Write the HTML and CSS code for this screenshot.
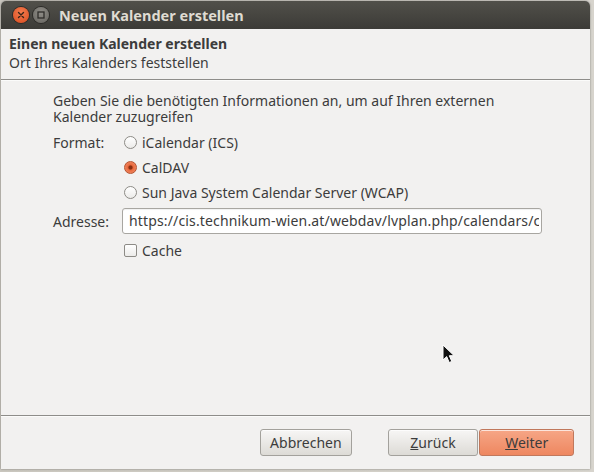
FILE: index.html
```html
<!DOCTYPE html>
<html lang="de">
<head>
<meta charset="utf-8">
<title>Neuen Kalender erstellen</title>
<link rel="stylesheet" href="styles.css">
</head>
<body>
<div class="window">
  <div class="titlebar">
    <span class="wbtn close">
      <svg width="10" height="10" viewBox="0 0 10 10"><path d="M2.5 2.5 L7.5 7.5 M7.5 2.5 L2.5 7.5" stroke="#3a2418" stroke-width="1.4" stroke-linecap="round"/></svg>
    </span>
    <span class="wbtn max">
      <svg width="10" height="10" viewBox="0 0 10 10"><rect x="2" y="2" width="6" height="6" fill="none" stroke="#2e2d2a" stroke-width="1.3"/></svg>
    </span>
    <span class="title">Neuen Kalender erstellen</span>
  </div>
  <div class="header">
    <div class="h-title">Einen neuen Kalender erstellen</div>
    <div class="h-sub">Ort Ihres Kalenders feststellen</div>
  </div>
  <div class="sep"></div>
  <div class="content">
    <p class="intro">Geben Sie die benötigten Informationen an, um auf Ihren externen Kalender zuzugreifen</p>
    <div class="form">
      <div class="label">Format:</div>
      <div class="opts">
        <label class="opt"><span class="radio"></span>iCalendar (ICS)</label>
        <label class="opt"><span class="radio on"></span>CalDAV</label>
        <label class="opt"><span class="radio"></span>Sun Java System Calendar Server (WCAP)</label>
      </div>
      <div class="label addr">Adresse:</div>
      <div class="input"><span class="val">https://cis.technikum-wien.at/webdav/lvplan.php/calendars/cis</span></div>
      <div></div>
      <label class="opt cache"><span class="check"></span>Cache</label>
    </div>
  </div>
  <div class="sep"></div>
  <div class="footer">
    <button class="btn cancel">Abbrechen</button>
    <button class="btn back"><u>Z</u>urück</button>
    <button class="btn next"><u>W</u>eiter</button>
  </div>
</div>
<svg class="cursor" width="15" height="21" viewBox="0 0 15 21"><path d="M1 1 L1 16 L4.7 12.6 L7.2 18.5 L9.8 17.4 L7.3 11.7 L12.2 11.7 Z" fill="#111" stroke="#fff" stroke-width="1" stroke-linejoin="round"/></svg>
</body>
</html>
```
FILE: styles.css
```css
html, body {
  margin: 0;
  padding: 0;
}
body {
  width: 594px;
  height: 472px;
  overflow: hidden;
  background: linear-gradient(90deg, #c9c6be 0%, #d7d4cd 100%);
  font-family: "Noto Sans", "DejaVu Sans", sans-serif;
  font-size: 14px;
  color: #3c3c3c;
  position: relative;
}
.window {
  margin: 1px 0 0 1px;
  width: 589px;
  height: 468px;
  background: #f2f1f0;
  border-radius: 5px 5px 0 0;
  display: flex;
  flex-direction: column;
  box-shadow: 0 0 2px rgba(0,0,0,0.45);
  overflow: hidden;
}
.titlebar {
  height: 28px;
  flex: none;
  background: linear-gradient(#51504a, #3c3b37);
  display: flex;
  align-items: center;
  padding-left: 12px;
  gap: 2px;
}
.wbtn {
  width: 16px;
  height: 16px;
  border-radius: 50%;
  display: flex;
  align-items: center;
  justify-content: center;
}
.close {
  background: radial-gradient(circle at 50% 35%, #f57d4f, #d84a1e);
  box-shadow: 0 0 0 1px #2c2b28;
}
.max {
  background: radial-gradient(circle at 50% 35%, #8f8d87, #65635e);
  box-shadow: 0 0 0 1px #2c2b28;
  margin-left: 2px;
}
.title {
  margin-left: 8px;
  color: #dfdbd2;
  font-weight: bold;
  font-size: 14.5px;
}
.header {
  height: 50px;
  flex: none;
  padding: 7px 0 0 8px;
  box-sizing: border-box;
  line-height: 16px;
}
.h-title {
  font-weight: bold;
  font-size: 14px;
}
.h-sub {
  margin-top: 3px;
}
.sep {
  flex: none;
  height: 1px;
  background: #8e8d8a;
  border-bottom: 1px solid #fbfbfa;
}
.content {
  flex: 1;
  padding: 12px 0 0 52px;
}
.intro {
  margin: 0;
  width: 470px;
  line-height: 16px;
}
.form {
  margin-top: 5px;
  display: grid;
  grid-template-columns: 69px 420px;
  align-items: center;
}
.label {
  align-self: start;
  line-height: 25px;
}
.label.addr {
  align-self: center;
  margin-top: 3px;
}
.opts {
  display: flex;
  flex-direction: column;
}
.opt {
  display: flex;
  align-items: center;
  height: 25px;
  padding-left: 2px;
}
.radio {
  width: 11px;
  height: 11px;
  border: 1px solid #8d8b86;
  border-radius: 50%;
  background: linear-gradient(#fff, #ecebe9);
  margin-right: 5px;
  flex: none;
}
.radio.on {
  background: radial-gradient(circle, #8a2f12 0 1.6px, #e9683c 2.6px, #f39673 100%);
  border-color: #b5522f;
}
.check {
  width: 11px;
  height: 11px;
  border: 1px solid #8d8b86;
  border-radius: 2px;
  background: linear-gradient(#fff, #ecebe9);
  margin-right: 5px;
  flex: none;
}
.input {
  margin-top: 3px;
  height: 26px;
  box-sizing: border-box;
  width: 420px;
  border: 1px solid #a8a6a1;
  border-radius: 3px;
  background: #fff;
  padding: 0 2px 0 6px;
  line-height: 24px;
  white-space: nowrap;
  overflow: hidden;
  box-shadow: inset 0 1px 1px rgba(0,0,0,0.06);
}
.val {
  display: block;
  overflow: hidden;
  letter-spacing: 0.15px;
}
.form > .cache {
  margin-top: 4px;
}
.footer {
  height: 52px;
  flex: none;
  display: flex;
  align-items: flex-start;
  padding: 12px 16px 0 259px;
  box-sizing: border-box;
}
.btn {
  font-family: inherit;
  font-size: 14px;
  color: #3c3c3c;
  height: 27px;
  border: 1px solid #a3a19c;
  border-radius: 3px;
  background: linear-gradient(#f7f6f5, #dddbd6);
  padding: 0;
  box-shadow: inset 0 1px 0 rgba(255,255,255,0.7);
}
.cancel { width: 92px; }
.back { width: 91px; margin-left: 36px; }
.next {
  width: 95px;
  margin-left: 1px;
  background: linear-gradient(#f6a686, #ee8760);
  border-color: #c0785c;
}
.cursor {
  position: absolute;
  left: 442px;
  top: 344px;
}
```
